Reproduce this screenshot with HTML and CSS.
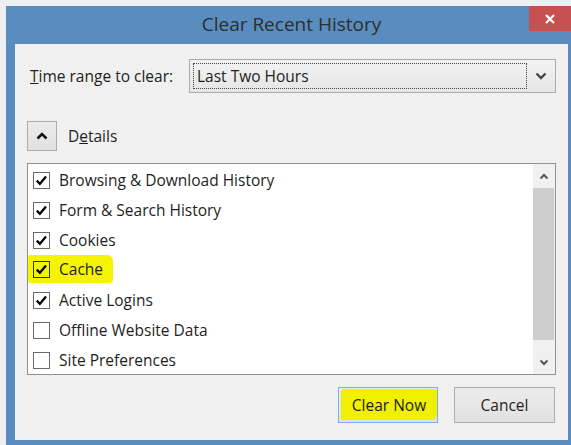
FILE: index.html
```html
<!DOCTYPE html>
<html lang="en">
<head>
<meta charset="utf-8">
<title>Clear Recent History</title>
<link rel="stylesheet" href="styles.css">
</head>
<body>
<div class="window">
  <div class="titlebar">
    <h1 class="title">Clear Recent History</h1>
    <button class="close" aria-label="Close">
      <svg width="12" height="12" viewBox="0 0 12 12"><path d="M2 2 L10 10 M10 2 L2 10" stroke="#fff" stroke-width="2.2" fill="none"/></svg>
    </button>
  </div>
  <div class="content">
    <div class="range-row">
      <label class="range-label"><u>T</u>ime range to clear:</label>
      <div class="select">
        <span class="select-value"><span class="focus">Last Two Hours</span></span>
        <span class="select-arrow">
          <svg width="12" height="8" viewBox="0 0 12 8"><path d="M1.5 1.5 L6 6 L10.5 1.5" stroke="#444" stroke-width="2.4" fill="none"/></svg>
        </span>
      </div>
    </div>

    <div class="details-row">
      <button class="toggle" aria-label="Hide details">
        <svg width="12" height="8" viewBox="0 0 12 8"><path d="M1.5 6.5 L6 2 L10.5 6.5" stroke="#111" stroke-width="2.6" fill="none"/></svg>
      </button>
      <span>D<u>e</u>tails</span>
    </div>

    <div class="list">
      <ul class="items">
        <li><span class="box checked"></span><span class="label">Browsing &amp; Download History</span></li>
        <li><span class="box checked"></span><span class="label">Form &amp; Search History</span></li>
        <li><span class="box checked"></span><span class="label">Cookies</span></li>
        <li class="marked"><span class="hl"><span class="box checked"></span><span class="label">Cache</span></span></li>
        <li><span class="box checked"></span><span class="label">Active Logins</span></li>
        <li><span class="box"></span><span class="label">Offline Website Data</span></li>
        <li><span class="box"></span><span class="label">Site Preferences</span></li>
      </ul>
      <div class="scrollbar">
        <span class="sb-arrow">
          <svg width="10" height="7" viewBox="0 0 10 7"><path d="M1.5 5.5 L5 2 L8.5 5.5" stroke="#555" stroke-width="2" fill="none"/></svg>
        </span>
        <div class="track"><div class="thumb"></div></div>
        <span class="sb-arrow">
          <svg width="10" height="7" viewBox="0 0 10 7"><path d="M1.5 1.5 L5 5 L8.5 1.5" stroke="#555" stroke-width="2" fill="none"/></svg>
        </span>
      </div>
    </div>

    <div class="actions">
      <button class="btn btn-primary"><span class="mark">Clear Now</span></button>
      <button class="btn">Cancel</button>
    </div>
  </div>
</div>
</body>
</html>
```

FILE: styles.css
```css
html, body {
  margin: 0;
  height: 100%;
}

body {
  background: #efeef3;
  overflow: hidden;
  font-family: "Open Sans", "Noto Sans", sans-serif;
  font-size: 15.5px;
  color: #1e1e1e;
}

/* dialog frame */
.window {
  position: relative;
  margin: 6px 0 0 6px;
  height: 439px;
  box-sizing: border-box;
  padding: 0 3px 5px 9px;
  background: #5a8dbf;
  display: flex;
  flex-direction: column;
}

.titlebar {
  height: 38px;
  display: flex;
  align-items: center;
  justify-content: center;
}

.title {
  margin: 0 0 1px;
  font-size: 19px;
  font-weight: 400;
  line-height: 1;
  color: #2d2d2d;
}

.close {
  position: absolute;
  top: 0;
  right: 0;
  width: 42px;
  height: 25px;
  border: 0;
  padding: 0;
  background: #c75050;
  display: flex;
  align-items: center;
  justify-content: center;
}

.content {
  flex: 1;
  background: #f0f0f0;
  padding: 15px 12px 17px;
  display: flex;
  flex-direction: column;
}

/* time range row */
.range-row {
  display: flex;
  align-items: center;
  height: 34px;
}

.range-label {
  margin-left: 3px;
}

.select {
  margin-left: auto;
  width: 367px;
  height: 34px;
  box-sizing: border-box;
  border: 1px solid #acacac;
  background: linear-gradient(#f3f3f3, #e5e5e5);
  padding: 3px 0 3px 3px;
  display: flex;
}

.select-value {
  flex: 1;
  display: flex;
}

.focus {
  flex: 1;
  display: flex;
  align-items: center;
  padding-left: 3px;
  border: 1px dotted #444;
}

.select-arrow {
  width: 28px;
  display: flex;
  align-items: center;
  justify-content: center;
}

/* details toggle */
.details-row {
  margin-top: 28px;
  display: flex;
  align-items: center;
  gap: 11px;
}

.toggle {
  width: 30px;
  height: 30px;
  padding: 0;
  border: 1px solid #adadad;
  background: linear-gradient(#ececec, #e1e1e1);
  display: flex;
  align-items: center;
  justify-content: center;
}

/* checklist */
.list {
  margin-top: 12px;
  height: 212px;
  box-sizing: border-box;
  border: 1px solid #8f9194;
  background: #fff;
  display: flex;
}

.items {
  flex: 1;
  margin: 0;
  padding: 1px 0 0 5px;
  list-style: none;
}

.items li {
  height: 30px;
  display: flex;
  align-items: center;
}

.items li.marked {
  align-items: flex-start;
}

.hl {
  display: flex;
  align-items: center;
  height: 28px;
  margin-left: -5px;
  padding: 0 10px 0 5px;
  background: #f4f400;
  border-radius: 2px 6px 4px 2px;
}

.box {
  width: 17px;
  height: 17px;
  box-sizing: border-box;
  border: 1px solid #6b6b6b;
  background: #fff;
  flex: none;
}

.hl .box {
  border-color: #333;
  background: transparent;
}

.box.checked {
  background-image: url("data:image/svg+xml,%3Csvg xmlns='http://www.w3.org/2000/svg' width='15' height='15' viewBox='0 0 15 15'%3E%3Cpath d='M2.8 7.6 L5.9 10.8 L12 3.6' stroke='%23000' stroke-width='2.3' fill='none'/%3E%3C/svg%3E");
  background-repeat: no-repeat;
  background-position: center;
}

.label {
  margin-left: 9px;
  white-space: nowrap;
}

.scrollbar {
  width: 22px;
  background: #f0f0f0;
  display: flex;
  flex-direction: column;
}

.sb-arrow {
  height: 24px;
  display: flex;
  align-items: center;
  justify-content: center;
}

.track {
  flex: 1;
}

.thumb {
  height: 152px;
  margin: 0 1px 0 0;
  background: #cdcdcd;
}

/* dialog buttons */
.actions {
  margin-top: 12px;
  margin-right: 1px;
  display: flex;
  justify-content: flex-end;
  gap: 16px;
}

.btn {
  width: 101px;
  height: 36px;
  padding: 0;
  border: 1px solid #adadad;
  background: linear-gradient(#ececec, #e1e1e1);
  font: inherit;
  color: #1e1e1e;
}

.btn-primary {
  width: 100px;
  border-color: #78b0ea;
  padding: 1px 0 2px 2px;
  display: flex;
}

.mark {
  flex: 1;
  display: flex;
  align-items: center;
  justify-content: center;
  background: #f0f000;
  border-radius: 2px 3px 6px 2px;
}
```
